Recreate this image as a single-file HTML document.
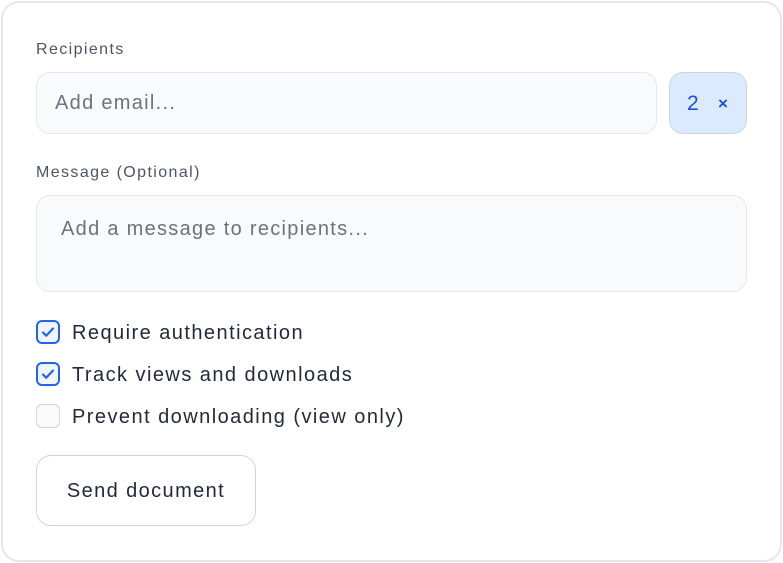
<!DOCTYPE html><html><head><style>
body{margin:0;width:783px;height:563px;background:#fff;font-family:"Liberation Sans",sans-serif;position:relative;overflow:hidden}
.card{position:absolute;left:1px;top:1px;width:777px;height:557px;border:2px solid #e5e7eb;border-radius:18px;box-sizing:content-box}
.a{position:absolute}
.lbl{font-size:16px;color:#4b5563;letter-spacing:1.4px}
.inp{background:#f9fafb;border:1.5px solid #e5e7eb;border-radius:14px;box-sizing:border-box;color:#6b7280;font-size:20px;letter-spacing:1.3px}
.cb{width:24px;height:24px;box-sizing:border-box;border-radius:6px;border:2px solid #2563eb;background:#eff6ff}
.cb.off{border:1.5px solid #d1d5db;background:#f9fafb}
.t{font-size:20px;color:#1f2937;letter-spacing:1.45px}
</style></head><body>
<div class="card"></div>
<div class="a lbl" style="left:36px;top:41px">Recipients</div>
<div class="a inp" style="left:36px;top:72px;width:621px;height:62px;padding:19px 18px">Add email...</div>
<div class="a" style="left:669px;top:72px;width:78px;height:62px;box-sizing:border-box;background:#dbeafe;border:1.5px solid #cfd4dc;border-radius:14px"><span class="a" style="left:17px;top:19px;font-size:21px;color:#1d4ed8">2</span><span class="a" style="left:48px;top:21px;font-size:17px;color:#1d4ed8;font-weight:bold">×</span></div>
<div class="a lbl" style="left:36px;top:164px">Message (Optional)</div>
<div class="a inp" style="left:36px;top:195px;width:711px;height:97px;padding:22px 24px">Add a message to recipients...</div>
<div class="a cb" style="left:36px;top:320px"><svg width="20" height="20" viewBox="0 0 20 20"><path d="M5 10.5l3.2 3.2L15 6.5" fill="none" stroke="#2563eb" stroke-width="2.2" stroke-linecap="round" stroke-linejoin="round"/></svg></div>
<div class="a t" style="left:72px;top:322px">Require authentication</div>
<div class="a cb" style="left:36px;top:362px"><svg width="20" height="20" viewBox="0 0 20 20"><path d="M5 10.5l3.2 3.2L15 6.5" fill="none" stroke="#2563eb" stroke-width="2.2" stroke-linecap="round" stroke-linejoin="round"/></svg></div>
<div class="a t" style="left:72px;top:364px">Track views and downloads</div>
<div class="a cb off" style="left:36px;top:404px"></div>
<div class="a t" style="left:72px;top:406px">Prevent downloading (view only)</div>
<div class="a" style="left:36px;top:455px;width:220px;height:71px;box-sizing:border-box;border:1.5px solid #d1d5db;border-radius:15px;text-align:center;line-height:70px;font-size:20px;color:#1f2937;letter-spacing:1.4px">Send document</div>
</body></html>
